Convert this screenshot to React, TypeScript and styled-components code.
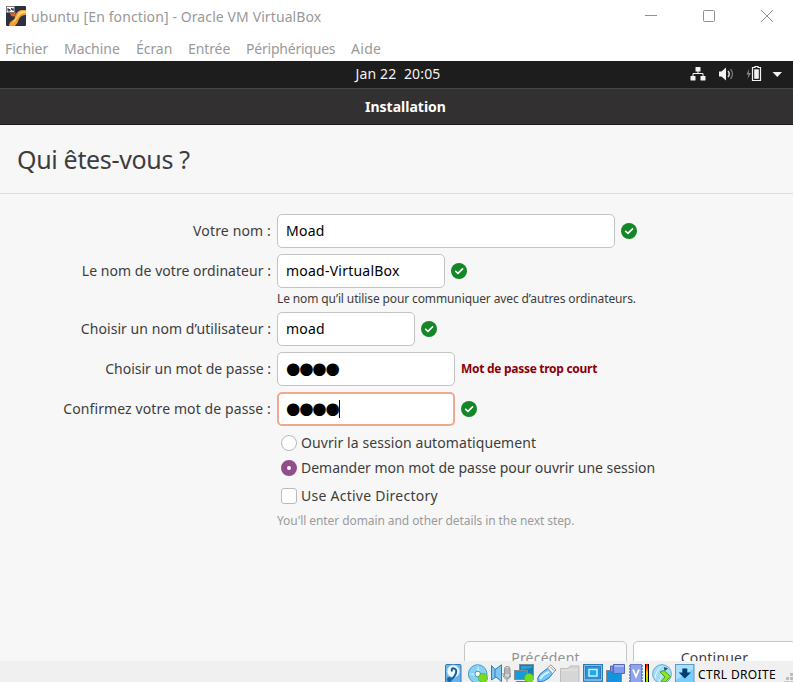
import React from 'react';
import styled, { createGlobalStyle, css } from 'styled-components';

const GlobalStyle = createGlobalStyle`
  * { box-sizing: border-box; }
  html, body { margin: 0; padding: 0; overflow: hidden; }
  body { font-family: 'Noto Sans', 'Open Sans', sans-serif; background: #fff; }
  svg { display: block; flex: none; }
`;

const Window = styled.div`
  width: 793px;
  height: 682px;
  display: flex;
  flex-direction: column;
  overflow: hidden;
  white-space: pre;
`;

const Label = styled.span<{ $spacing?: number }>`
  letter-spacing: ${(p) => p.$spacing ?? 0}px;
`;

const TitleBar = styled.header`
  height: 32px;
  flex: none;
  display: flex;
  align-items: center;
  padding-left: 6px;
  background: #fff;
  color: #999;
  font-size: 14px;
`;

const TitleText = styled.span`
  margin-left: 5px;
  letter-spacing: 0.1px;
`;

const WindowControls = styled.div`
  margin-left: auto;
  padding-right: 20px;
  display: flex;
  gap: 46px;
`;

const MenuBar = styled.nav`
  height: 29px;
  flex: none;
  display: flex;
  gap: 16px;
  padding: 7px 5px 0;
  background: #fff;
  color: #999;
  font-size: 14px;
  line-height: 19px;
`;

const MenuItem = styled.span<{ $width: number; $spacing?: number }>`
  width: ${(p) => p.$width}px;
  letter-spacing: ${(p) => p.$spacing ?? -0.05}px;
`;

const TopBar = styled.div`
  height: 27px;
  flex: none;
  display: grid;
  grid-template-columns: 355.5px 1fr auto;
  align-items: center;
  padding-bottom: 2px;
  background: #1d1d1d;
  color: #f2f2f2;
  font-size: 14px;
`;

const Clock = styled.span`
  grid-column: 2;
  letter-spacing: 0.15px;
`;

const Tray = styled.div`
  display: flex;
  align-items: center;
  padding-right: 11px;
`;

const InstallerTitle = styled.div`
  height: 37px;
  flex: none;
  display: flex;
  align-items: center;
  justify-content: center;
  padding-left: 18px;
  border-top: 1px solid #474747;
  border-bottom: 1px solid #1c1b1b;
  background: #333031;
  color: #fff;
  font-size: 14px;
  font-weight: 700;
`;

const Content = styled.main`
  flex: 1;
  min-height: 0;
  display: flex;
  flex-direction: column;
  overflow: hidden;
  background: #f7f7f7;
  color: #3d3d3d;
  font-size: 14px;
`;

const Heading = styled.h1`
  height: 69px;
  flex: none;
  margin: 0;
  padding: 16px 0 0 17px;
  border-bottom: 1px solid #dcdcdc;
  font-size: 25px;
  font-weight: 400;
  line-height: 36px;
  letter-spacing: -0.33px;
`;

const Form = styled.div`
  display: flex;
  flex-direction: column;
  padding-top: 20px;
`;

const FieldRow = styled.div`
  display: grid;
  grid-template-columns: 271px 6px auto auto 1fr;
  align-items: center;
  height: 34px;
  margin-bottom: 6px;
`;

const FieldLabel = styled.label<{ $spacing: number }>`
  justify-self: end;
  letter-spacing: ${(p) => p.$spacing}px;
  padding-bottom: 1px;
`;

const Entry = styled.div<{ $width: number; $focused?: boolean }>`
  grid-column: 3;
  width: ${(p) => p.$width}px;
  height: 34px;
  display: flex;
  align-items: center;
  padding: 0 8px 1px;
  border: 1px solid #c3c3c3;
  border-radius: 5px;
  background: #fff;
  color: #000;
  letter-spacing: 0.23px;
  ${(p) =>
    p.$focused &&
    css`
      border: 2px solid #f2a88e;
      padding: 0 7px;
    `}
`;

const Password = styled.span`
  font-family: 'DejaVu Sans', sans-serif;
  font-size: 16.5px;
  line-height: 20px;
  letter-spacing: -1.25px;
`;

const Caret = styled.span`
  width: 1px;
  height: 18px;
  background: #000;
`;

const Feedback = styled.div`
  grid-column: 4;
  margin-left: 6px;
`;

const Warning = styled(Feedback)`
  padding-bottom: 2px;
  color: #8b0007;
  font-size: 12px;
  font-weight: 700;
  letter-spacing: -0.29px;
`;

const Hint = styled.div<{ $muted?: boolean; $spacing: number }>`
  margin: ${(p) => (p.$muted ? 2 : -4)}px 0 0 277px;
  height: 22px;
  line-height: 17px;
  font-size: 12px;
  color: ${(p) => (p.$muted ? '#9b9b9b' : '#3d3d3d')};
  letter-spacing: ${(p) => p.$spacing}px;
`;

const Choices = styled.div`
  display: flex;
  flex-direction: column;
  margin-top: -1px;
  padding-left: 281px;
`;

const Choice = styled.label<{ $height: number }>`
  height: ${(p) => p.$height}px;
  display: flex;
  align-items: center;
  gap: 4px;
`;

const Radio = styled.span<{ $checked?: boolean }>`
  width: 16px;
  height: 16px;
  border-radius: 50%;
  border: 1px solid #b9b9b9;
  background: #fff;
  ${(p) => p.$checked && css`border: 6px solid #924d8b;`}
`;

const Checkbox = styled.span`
  width: 16px;
  height: 16px;
  border-radius: 3px;
  border: 1px solid #b9b9b9;
  background: #fff;
`;

const Actions = styled.div`
  flex: none;
  height: 20px;
  margin-top: auto;
  display: flex;
  gap: 6px;
  padding-left: 464px;
`;

const Button = styled.button<{ $disabled?: boolean }>`
  flex: none;
  width: 163px;
  height: 34px;
  padding: 0 0 2px;
  border: 1px solid #c6c6c6;
  border-radius: 5px;
  background: ${(p) => (p.$disabled ? '#fafafa' : '#fff')};
  color: ${(p) => (p.$disabled ? '#929292' : '#3d3d3d')};
  font: 14px 'Noto Sans', sans-serif;
  letter-spacing: 0.2px;
`;

const StatusBar = styled.footer`
  height: 21px;
  flex: none;
  display: flex;
  align-items: flex-start;
  gap: 3px;
  padding: 3px 0 0 445px;
  overflow: hidden;
  background: #f0f0f0;
  color: #000;
  font-size: 12px;
`;

const HostKey = styled.span`
  flex: none;
  width: 83px;
  line-height: 18px;
  padding-top: 2px;
  letter-spacing: 0.35px;
`;

const Heat = styled.span`
  width: 4px;
  height: 20px;
  margin-left: -1px;
  border: 1px solid #000;
  border-width: 0 1px;
  background: linear-gradient(#f00, #fc0 45%, #5f0);
`;

const AppIcon = () => (
  <svg width="20" height="20" viewBox="0 0 20 20">
    <rect width="20" height="20" rx="1" fill="#2b3140" />
    <path d="M9 10Q11 5 15 4H20V9Q15 9 13 13Q12 17 9 20H3Q3 16 7 14Q9 13 9 10Z" fill="#f49b2d" />
    <path d="M13 6Q16 4 20 5V7Q15 7 12 11Q10 15 6 18Q10 12 13 6Z" fill="#ffd275" />
    <path d="M4 7Q8 8 10 6L9 10Q5 12 4 7Z" fill="#ea6224" />
    <rect x="0.5" y="0.5" width="8" height="6" fill="#fff" stroke="#777" strokeWidth=".7" />
    <path d="M2 2V5H4V3.5H2M5.5 2V3.5H7.5M7 2V5" fill="none" stroke="#222" strokeWidth=".9" />
  </svg>
);

const Valid = () => (
  <Feedback>
    <svg width="16" height="16" viewBox="0 0 16 16">
      <circle cx="8" cy="8" r="8" fill="#138726" />
      <path d="M4.2 7.8L7 10.4L12 5.4" fill="none" stroke="#fff" strokeWidth="1.6" />
    </svg>
  </Feedback>
);

const TrayIcons = () => (
  <Tray>
    <svg width="92" height="16" viewBox="0 0 92 16" fill="#f2f2f2">
      <rect x="5.5" y="1" width="5" height="4.5" rx=".6" />
      <rect x=".5" y="10" width="5" height="4.5" rx=".6" />
      <rect x="10.5" y="10" width="5" height="4.5" rx=".6" />
      <path d="M8 5V7.5M3 10V7.5H13V10" fill="none" stroke="#f2f2f2" />
      <path d="M29 5.5H31.5L36 1.5V14.5L31.5 10.5H29Z" />
      <path d="M38 5Q40.5 8 38 11" fill="none" stroke="#d8d8d8" strokeWidth="1.5" />
      <path d="M40.5 3Q44.5 8 40.5 13" fill="none" stroke="#747474" strokeWidth="1.3" />
      <path d="M59 3L56.5 8.6H58.5L57.5 13L61 7H58.8Z" fill="#888" />
      <path d="M65 1V0.5H68V1.5H70.5V14.5H62.5V1.5H65Z" fill="none" stroke="#f2f2f2" strokeWidth="1.2" />
      <rect x="64.2" y="3.3" width="4.6" height="9.5" />
      <path d="M82.5 6H92L87.3 11Z" />
    </svg>
  </Tray>
);

const ReadyDot = () => (
  <circle cx="15" cy="14" r="4.6" fill="#76db21" stroke="#4eb11c" strokeWidth=".7" />
);

const DeviceIcon = ({ children, width = 20 }: { children: React.ReactNode; width?: number }) => (
  <svg width={width} height="18" viewBox={`0 0 ${width} 18`} stroke="#3478b4" strokeWidth="1">
    {children}
  </svg>
);

const DeviceIcons = () => (
  <>
    <DeviceIcon>
      <rect x=".5" y=".5" width="15.5" height="19" rx="1" fill="#65b6ee" />
      <circle cx="8.3" cy="7.3" r="6.2" fill="#eef9ff" stroke="#a3d6f8" />
      <path d="M7 7.5Q6 4 8.8 4.4Q12 5 11 9Q10 13 5 16" fill="none" stroke="#175b98" strokeWidth="2" />
      <circle cx="4.5" cy="15.5" r="2.4" fill="#1e629b" />
    </DeviceIcon>
    <DeviceIcon>
      <circle cx="9.7" cy="10" r="9.3" fill="#86d2f4" stroke="#4f9bc7" />
      <path d="M9.7 1L12 8L9 8ZM.8 10L7 9V12Z" fill="#bdecff" stroke="none" />
      <circle cx="9.7" cy="10" r="2.8" fill="#fff" stroke="#408ab8" />
      <ReadyDot />
    </DeviceIcon>
    <DeviceIcon>
      <path d="M.5 1.5L4 5.5L10.5 .8V17.5L5 13L.5 16Z" fill="#7cc7f2" />
      <path d="M4 5.5V13" fill="none" />
      <rect x="13.5" y="2.5" width="5.5" height="11" rx="2.5" fill="#d7d7d7" stroke="#949494" />
      <path d="M14 5H19M14 7H19M14 9H19M12 9Q12 15 16 15T20 9M16 15V18" fill="none" stroke="#909090" />
    </DeviceIcon>
    <DeviceIcon>
      <rect x="5.5" y=".5" width="14" height="11" fill="#147db8" stroke="#848b91" />
      <rect x=".5" y="6.5" width="13" height="9" fill="#159bdd" stroke="#848b91" />
      <path d="M7 2H18V4L7 6Z" fill="#289edb" stroke="none" />
      <path d="M2 17.5H12" stroke="#777" />
      <ReadyDot />
    </DeviceIcon>
    <DeviceIcon>
      <path d="M1 18L.8 14Q2 10 7 7L11 4L16 9L12 14Q7 18 1 18Z" fill="#76c8fa" />
      <path d="M3 15Q6 10 12 8" fill="none" stroke="#d2f3ff" strokeWidth="2" />
      <path d="M10.5 4L14 .8L19 6L15.5 9.5Z" fill="#f4f4f4" stroke="#969696" />
      <path d="M14 3.5L15 4.5M16 5.5L17 6.5" stroke="#444" />
    </DeviceIcon>
    <DeviceIcon>
      <path d="M.5 20V4.5H8L10 2H19V20Z" fill="#d6d6d6" stroke="#bebebe" />
      <path d="M1 6H18" stroke="#e8e8e8" />
    </DeviceIcon>
    <DeviceIcon>
      <rect x=".7" y=".7" width="18.6" height="16.5" fill="#d6edff" stroke="#267db9" strokeWidth="1.4" />
      <rect x="2.5" y="2.5" width="15" height="12.5" fill="#219ae5" />
      <rect x="6" y="5.5" width="8" height="6.5" fill="#20a8ed" stroke="#d8f4ff" strokeWidth="1.4" />
    </DeviceIcon>
    <DeviceIcon>
      <rect x=".5" y="6.5" width="15" height="13" fill="#1593df" stroke="#86898d" />
      <path d="M4.5 2H7V8H4.5ZM7.5 .5H18.5V9.5H7.5Z" fill="#8299e9" stroke="#5268b7" />
      <path d="M8.5 2H18" stroke="#b9c8ff" strokeWidth="1.5" />
    </DeviceIcon>
    <DeviceIcon width={14}>
      <path d="M0 2H14M0 5H14M0 8H14M0 11H14M0 14H14M0 17H14" stroke="#526eb2" strokeWidth="1.6" />
      <rect x="1.5" y=".5" width="11" height="19" fill="#8fa5ea" stroke="#6c82c4" />
      <path d="M4 5.5L7 12.5L10 5.5" fill="none" stroke="#fff" strokeWidth="1.8" />
    </DeviceIcon>
  </>
);

const InputIcons = () => (
  <>
    <DeviceIcon>
      <circle cx="10" cy="10" r="9.4" fill="#a1dcf5" stroke="#6aabd0" />
      <path d="M3 14Q4 6 10 2M7 18L13 3" fill="none" stroke="#e0f7ff" />
      <path d="M8 8L12 6.5L18.5 12.5L13 18H9L13 13Z" fill="#8ee52a" stroke="#4b9d1d" />
      <path d="M12 3L16 4.5L12.5 7Z" fill="#174b68" stroke="none" />
    </DeviceIcon>
    <DeviceIcon>
      <rect x=".5" y=".5" width="18.5" height="20" fill="#78cdfa" stroke="#5c9cc3" />
      <path d="M1 1H18V5L1 16Z" fill="#a6e2ff" stroke="none" />
      <path d="M7.3 4.5H12.3V8.5H16L9.8 14.5L3.7 8.5H7.3Z" fill="#063c72" stroke="none" />
    </DeviceIcon>
  </>
);

const Grip = () => (
  <svg width="9" height="18" viewBox="0 0 9 18" fill="#bdbdbd">
    <path d="M6 9H9V12H6ZM2 13H5V16H2ZM6 13H9V16H6ZM0 17H1V18H0ZM2 17H5V18H2ZM6 17H9V18H6Z" />
  </svg>
);

export default function App() {
  return (
    <>
      <GlobalStyle />
      <Window>
        <TitleBar>
          <AppIcon />
          <TitleText>ubuntu [En fonction] - Oracle VM VirtualBox</TitleText>
          <WindowControls>
            <svg width="12" height="13" viewBox="0 0 12 13"><path d="M0 5.5H12" stroke="#929292" /></svg>
            <svg width="12" height="13" viewBox="0 0 12 13"><rect x=".5" y=".5" width="11" height="11" rx="1" fill="none" stroke="#929292" /></svg>
            <svg width="12" height="13" viewBox="0 0 12 13"><path d="M0 0L12 12M12 0L0 12" stroke="#929292" /></svg>
          </WindowControls>
        </TitleBar>
        <MenuBar>
          <MenuItem $width={43}>Fichier</MenuItem>
          <MenuItem $width={56}>Machine</MenuItem>
          <MenuItem $width={36}>Écran</MenuItem>
          <MenuItem $width={42} $spacing={-0.1}>Entrée</MenuItem>
          <MenuItem $width={89} $spacing={-0.22}>Périphériques</MenuItem>
          <MenuItem $width={32} $spacing={0.3}>Aide</MenuItem>
        </MenuBar>
        <TopBar>
          <Clock>Jan 22  20:05</Clock>
          <TrayIcons />
        </TopBar>
        <InstallerTitle>Installation</InstallerTitle>
        <Content>
          <Heading>Qui êtes-vous ?</Heading>
          <Form>
            <FieldRow>
              <FieldLabel $spacing={0.15}>Votre nom :</FieldLabel>
              <Entry $width={338}>Moad</Entry>
              <Valid />
            </FieldRow>
            <FieldRow>
              <FieldLabel $spacing={0.04}>Le nom de votre ordinateur :</FieldLabel>
              <Entry $width={168}>moad-VirtualBox</Entry>
              <Valid />
            </FieldRow>
            <Hint $spacing={-0.12}>Le nom qu’il utilise pour communiquer avec d’autres ordinateurs.</Hint>
            <FieldRow>
              <FieldLabel $spacing={0.05}>Choisir un nom d’utilisateur :</FieldLabel>
              <Entry $width={138}>moad</Entry>
              <Valid />
            </FieldRow>
            <FieldRow>
              <FieldLabel $spacing={0}>Choisir un mot de passe :</FieldLabel>
              <Entry $width={178}><Password>●●●●</Password></Entry>
              <Warning>Mot de passe trop court</Warning>
            </FieldRow>
            <FieldRow>
              <FieldLabel $spacing={0.11}>Confirmez votre mot de passe :</FieldLabel>
              <Entry $width={178} $focused><Password>●●●●</Password><Caret /></Entry>
              <Valid />
            </FieldRow>
            <Choices>
              <Choice $height={23}><Radio /><Label $spacing={0.08}>Ouvrir la session automatiquement</Label></Choice>
              <Choice $height={27}><Radio $checked /><Label $spacing={-0.02}>Demander mon mot de passe pour ouvrir une session</Label></Choice>
              <Choice $height={29}><Checkbox /><Label $spacing={0.25}>Use Active Directory</Label></Choice>
            </Choices>
            <Hint $muted $spacing={-0.08}>You'll enter domain and other details in the next step.</Hint>
          </Form>
          <Actions>
            <Button $disabled>Précédent</Button>
            <Button>Continuer</Button>
          </Actions>
        </Content>
        <StatusBar>
          <DeviceIcons />
          <Heat />
          <InputIcons />
          <HostKey>CTRL DROITE</HostKey>
          <Grip />
        </StatusBar>
      </Window>
    </>
  );
}
